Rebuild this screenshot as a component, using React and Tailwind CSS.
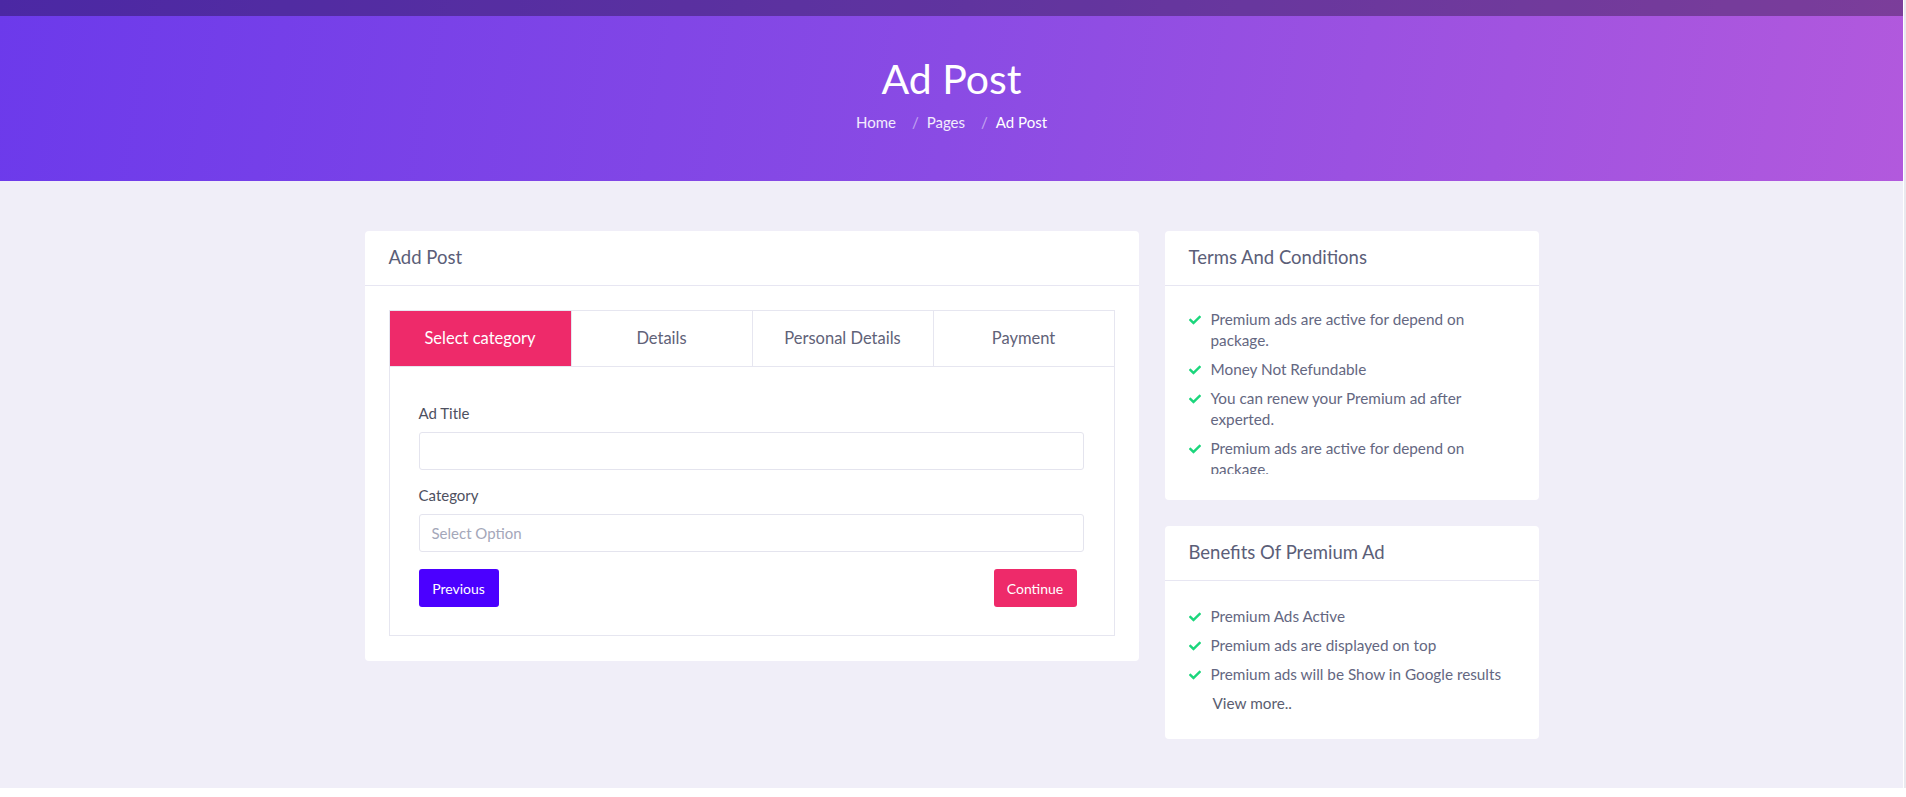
import React from 'react';
import { FaCheck } from 'react-icons/fa';

const terms = [
  'Premium ads are active for depend on package.',
  'Money Not Refundable',
  'You can renew your Premium ad after experted.',
  'Premium ads are active for depend on package.',
];

const benefits = [
  'Premium Ads Active',
  'Premium ads are displayed on top',
  'Premium ads will be Show in Google results',
];

const tabs = ['Select category', 'Details', 'Personal Details', 'Payment'];

const CheckItem = ({ children }) => (
  <li className="flex items-start gap-[10px]">
    <FaCheck className="mt-[5px] h-[12px] w-[12px] shrink-0 text-[#1bd67c]" />
    <span>{children}</span>
  </li>
);

const SideCard = ({ title, children, bodyClass }) => (
  <div className="rounded-[4px] bg-white">
    <div className="flex h-[55px] items-center border-b border-[#e7e6f2] px-[24px] text-[18.5px] text-[#5b5e78]">
      {title}
    </div>
    <div className={bodyClass}>{children}</div>
  </div>
);

const App = () => {
  return (
    <div className="flex w-full bg-white" style={{ fontFamily: 'Lato, "Open Sans", sans-serif' }}>
      <div className="flex-1">
        {/* page banner */}
        <header className="h-[181px] bg-[linear-gradient(100deg,#6c3aeb,#8a4be4_50%,#b259dd)] text-white">
          <div className="h-[16px] bg-black/30"></div>
          <div className="flex flex-col items-center pt-[39px]">
            <h1 className="text-[41px] leading-[48px]">Ad Post</h1>
            <nav className="mt-[8px] flex items-center text-[15px] leading-[22px]">
              <span className="text-white/90">Home</span>
              <span className="pl-[16px] pr-[8px] text-white/50">/</span>
              <span className="text-white/90">Pages</span>
              <span className="pl-[16px] pr-[8px] text-white/50">/</span>
              <span>Ad Post</span>
            </nav>
          </div>
        </header>

        <main className="h-[607px] bg-[#f0eef8] pt-[50px]">
          <div className="mx-auto flex w-[1174px] items-start gap-[26px]">
            {/* add post card */}
            <div className="w-[774px] rounded-[4px] bg-white">
              <div className="flex h-[55px] items-center border-b border-[#e7e6f2] px-[24px] text-[18.5px] text-[#5b5e78]">
                Add Post
              </div>
              <div className="px-[24px] pb-[25px] pt-[24px]">
                <div className="grid grid-cols-4 border border-[#e6e6f0]">
                  {tabs.map((t, i) => (
                    <div
                      key={t}
                      className={`flex h-[55px] items-center justify-center text-[16.5px] ${
                        i === 0
                          ? 'bg-[#ee2a6a] text-white'
                          : 'border-l border-[#e6e6f0] text-[#5f6278]'
                      }`}
                    >
                      {t}
                    </div>
                  ))}
                </div>
                <div className="border-x border-b border-[#e6e6f0] pb-[28px] pl-[29px] pr-[30px] pt-[36px]">
                  <label className="mb-[8px] block text-[15px] leading-[21px] text-[#4e5060]">Ad Title</label>
                  <input className="block h-[38px] w-full rounded-[3px] border border-[#e4e4ee] px-[12px] text-[15px] outline-none" />
                  <label className="mb-[8px] mt-[15px] block text-[15px] leading-[21px] text-[#4e5060]">Category</label>
                  <div className="flex h-[38px] w-full items-center rounded-[3px] border border-[#e4e4ee] px-[12px] text-[15px] text-[#a4a7b9]">
                    Select Option
                  </div>
                  <div className="mt-[17px] flex items-center justify-between pr-[7px]">
                    <button className="h-[38px] w-[80px] rounded-[3px] bg-[#4b00ff] text-[14px] text-white">
                      Previous
                    </button>
                    <button className="h-[38px] w-[83px] rounded-[3px] bg-[#ee2a6a] text-[14px] text-white">
                      Continue
                    </button>
                  </div>
                </div>
              </div>
            </div>

            {/* side column */}
            <div className="flex w-[374px] flex-col gap-[26px]">
              <SideCard title="Terms And Conditions" bodyClass="px-[24px] pb-[26px] pt-[23px]">
                <ul className="flex h-[165px] flex-col gap-[8px] overflow-hidden text-[15.3px] leading-[21px] text-[#646781]">
                  {terms.map((t, i) => (
                    <CheckItem key={i}>{t}</CheckItem>
                  ))}
                </ul>
              </SideCard>
              <SideCard title="Benefits Of Premium Ad" bodyClass="px-[24px] pb-[25px] pt-[25px]">
                <ul className="flex flex-col gap-[8px] text-[15.3px] leading-[21px] text-[#646781]">
                  {benefits.map((t, i) => (
                    <CheckItem key={i}>{t}</CheckItem>
                  ))}
                  <li className="pl-[24px] text-[#5a5d70]">View more..</li>
                </ul>
              </SideCard>
            </div>
          </div>
        </main>
      </div>
      {/* scrollbar strip */}
      <div className="w-[3px] border-l border-white bg-[#e9e9ee]"></div>
    </div>
  );
};

export default App;
